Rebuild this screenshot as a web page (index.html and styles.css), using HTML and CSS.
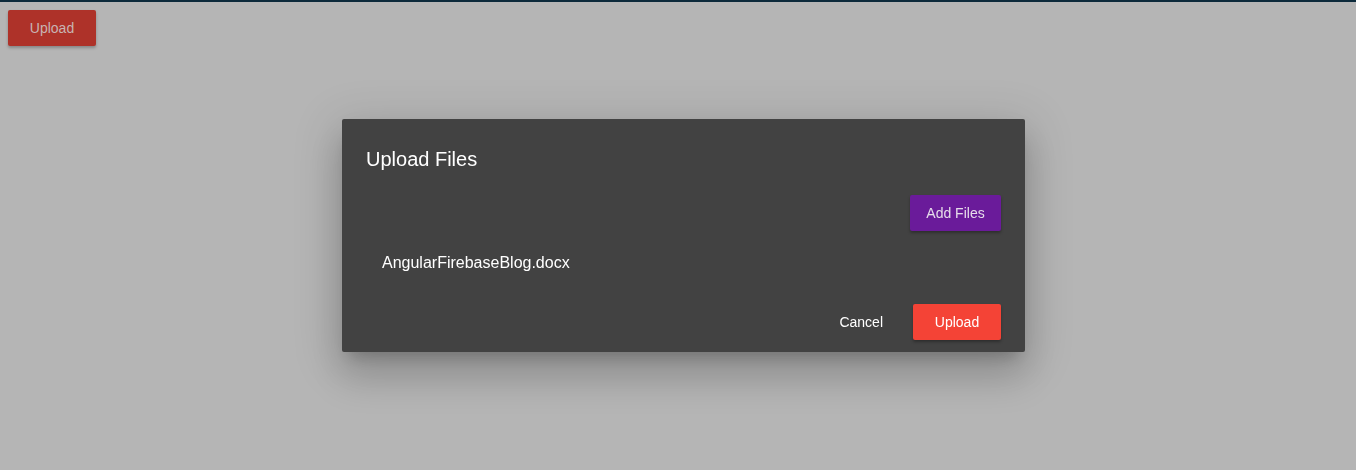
FILE: index.html
```html
<!DOCTYPE html>
<html>
<head>
<meta charset="utf-8">
<link rel="stylesheet" href="styles.css">
</head>
<body>
<div class="topbar"></div>
<div class="page">
  <button class="btn btn-page">Upload</button>
</div>
<div class="overlay">
  <div class="dialog">
    <h2 class="dialog-title">Upload Files</h2>
    <div class="dialog-content">
      <div class="add-row">
        <button class="btn btn-purple">Add Files</button>
      </div>
      <div class="file-list">
        <div class="file-item">AngularFirebaseBlog.docx</div>
      </div>
    </div>
    <div class="dialog-actions">
      <button class="btn btn-flat">Cancel</button>
      <button class="btn btn-red">Upload</button>
    </div>
  </div>
</div>
</body>
</html>
```
FILE: styles.css
```css
html, body {
  margin: 0;
  padding: 0;
  height: 100%;
}
body {
  background: #b5b5b5;
  font-family: "Liberation Sans", Arial, sans-serif;
  overflow: hidden;
}
.topbar {
  height: 2px;
  background: #0c2a3b;
}
.page {
  padding: 8px;
}
.btn {
  font-family: "Liberation Sans", Arial, sans-serif;
  font-size: 14px;
  height: 36px;
  min-width: 88px;
  padding: 0 16px;
  border: none;
  border-radius: 2px;
  cursor: pointer;
  line-height: 36px;
}
.btn-page {
  background: #ae3229;
  color: #c8b4b2;
  box-shadow: 0 2px 3px rgba(0,0,0,0.25);
}
.overlay {
  position: fixed;
  inset: 0;
  display: flex;
  align-items: center;
  justify-content: center;
  padding-left: 11px;
}
.dialog {
  width: 683px;
  box-sizing: border-box;
  background: #424242;
  border-radius: 2px;
  padding: 24px 24px 12px 24px;
  box-shadow: 0 11px 15px -7px rgba(0,0,0,0.2), 0 24px 38px 3px rgba(0,0,0,0.14), 0 9px 46px 8px rgba(0,0,0,0.12);
  color: #fff;
}
.dialog-title {
  margin: 0 0 20px 0;
  font-size: 20px;
  font-weight: normal;
  line-height: 32px;
}
.add-row {
  display: flex;
  justify-content: flex-end;
}
.btn-purple {
  background: #6a1b9a;
  color: #e6dcea;
  box-shadow: 0 2px 3px rgba(0,0,0,0.3);
  min-width: 91px;
  margin-right: 0;
}
.file-list {
  padding: 22px 16px 0 16px;
}
.file-item {
  font-size: 16px;
  line-height: 20px;
}
.dialog-actions {
  display: flex;
  justify-content: flex-end;
  align-items: center;
  gap: 14px;
  margin-top: 31px;
}
.btn-flat {
  background: transparent;
  color: #fff;
  min-width: 64px;
}
.btn-red {
  background: #f44336;
  color: #fff;
  box-shadow: 0 2px 3px rgba(0,0,0,0.3);
}
```
